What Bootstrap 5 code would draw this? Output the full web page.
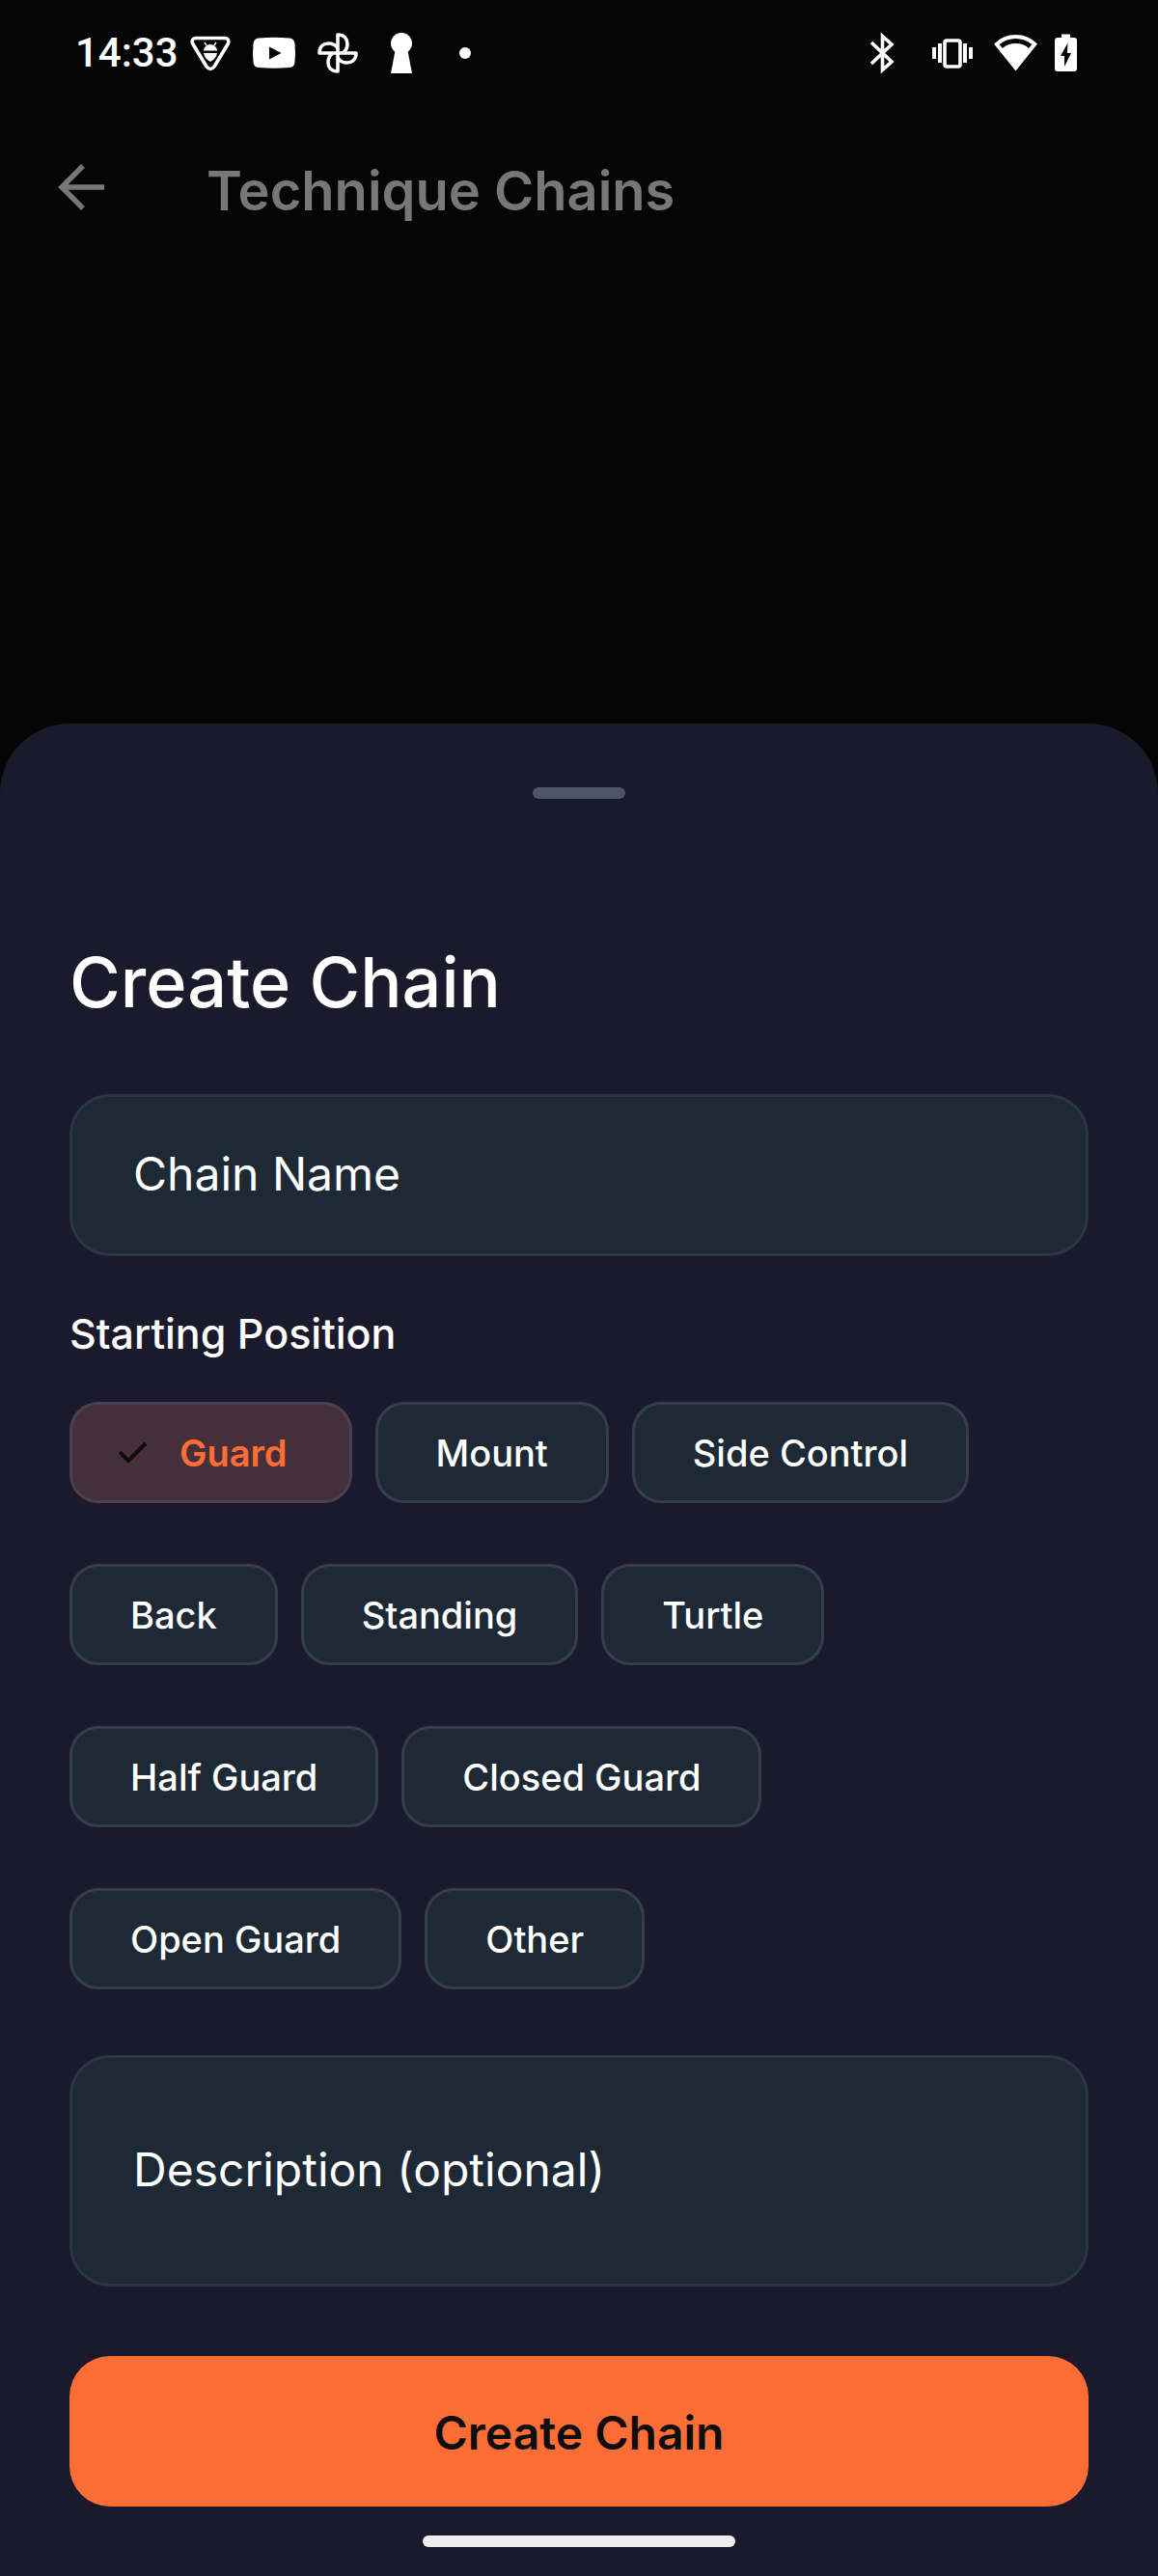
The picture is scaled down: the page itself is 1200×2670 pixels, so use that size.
<!DOCTYPE html>
<html lang="en" data-bs-theme="dark">
<head>
<meta charset="utf-8">
<meta name="viewport" content="width=device-width, initial-scale=1">
<title>Technique Chains</title>
<link href="https://cdn.jsdelivr.net/npm/bootstrap@5.3.0/dist/css/bootstrap.min.css" rel="stylesheet">
<style>
  :root { --sheet: #1b192c; --field: #1e2936; --accent: #ff6d36; }
  body { background: #050505; color: #fff; font-family: Inter, Roboto, sans-serif; }
  svg { display: block; flex: none; }

  .status-bar { height: 110px; padding: 0 84px 0 78px; }
  .status-time { font: 500 42px/48px Roboto, sans-serif; margin-right: 9px; }
  .status-icons { gap: 18px; }
  .app-bar { height: 168px; padding: 0 60px; gap: 106px; color: #777; }
  .app-title { font-size: 56px; line-height: 72px; font-weight: 600; color: inherit; }

  .sheet { background: var(--sheet); border-radius: 72px 72px 0 0; padding: 66px 72px 30px; }
  .grabber { width: 96px; height: 12px; background: #4d5564; margin-bottom: 148px; }
  .sheet-title { font-size: 72px; line-height: 84px; font-weight: 500; margin-bottom: 74px; color: #fff; }

  .field, .field:focus {
    background: var(--field); color: #fff; border: 3px solid #2c3544; border-radius: 42px;
    font-size: 48px; line-height: 60px; padding: 50px 63px 52px; box-shadow: none; resize: none;
  }
  .field-tall, .field-tall:focus { padding-top: 86px; padding-bottom: 88px; overflow: hidden; }
  .field::placeholder { color: #fff; opacity: 1; }

  .group-title { font-size: 43px; line-height: 54px; font-weight: 500; margin: 53px 0 44px; color: #fff; }
  .chips { gap: 63px 24px; margin-bottom: 68px; }
  .chip.btn {
    display: flex; align-items: center; gap: 32px; height: 105px; padding: 0 60px;
    border: 3px solid #363e4d; border-radius: 30px; background: var(--field); color: #fff;
    font-size: 38px; line-height: 54px; font-weight: 500;
  }
  .chip svg { display: none; }
  .btn-check:checked + .chip.btn {
    background: #45303a; border-color: #49414f; color: var(--accent); font-weight: 600; padding: 0 64px 0 45px;
  }
  .btn-check:checked + .chip svg { display: block; }

  .submit.btn {
    background: var(--accent); color: #0d0d0d; border: 0; border-radius: 42px;
    font-size: 48px; line-height: 60px; font-weight: 600; padding: 50px 48px 46px; margin: 72px 0 30px;
  }
  .home-bar { width: 324px; height: 12px; background: #eee; }
</style>
</head>
<body>
<div class="d-flex flex-column min-vh-100">
  <div class="status-bar d-flex align-items-center justify-content-between">
    <div class="d-flex align-items-center">
      <span class="status-time">14:33</span>
      <div class="status-icons d-flex align-items-center">
        <svg width="48" height="48" viewBox="0 0 48 48" fill="none" aria-hidden="true">
          <path d="M9 8.500h30q5 .5 3.500 5.500L28 38q-4 5-8 0L5.500 14Q4 9 9 8.500z" stroke="#fff" stroke-width="3.600" stroke-linejoin="round"/>
          <path d="M17 21.500q1-6.500 7-6.500t7 6.500zM17 24h14q-1 6-7 9-6-3-7-9z" fill="#fff"/>
          <path d="M20 16l-2-3M28 16l2-3" stroke="#fff" stroke-width="1.500"/>
        </svg>
        <svg width="48" height="48" viewBox="0 0 48 48" aria-hidden="true">
          <path fill="#fff" fill-rule="evenodd" d="M8 8.500q16-1.500 32 0 5 .5 5.500 6 1 9.500 0 19-.5 5-5.500 5.500-16 1.500-32 0-5-.5-5.500-5.500-1-9.500 0-19 .5-5.500 5.500-6zM19 17.500v13L31.500 24z"/>
        </svg>
        <svg width="48" height="48" viewBox="0 0 48 48" fill="none" stroke="#fff" stroke-width="3.600" stroke-linejoin="round" aria-hidden="true">
          <path d="M24 24V5c7 0 10 4.500 10 9.500 0 4-2 7.500-5 9.500"/>
          <path d="M24 24V5c7 0 10 4.500 10 9.500 0 4-2 7.500-5 9.500" transform="rotate(90 24 24)"/>
          <path d="M24 24V5c7 0 10 4.500 10 9.500 0 4-2 7.500-5 9.500" transform="rotate(180 24 24)"/>
          <path d="M24 24V5c7 0 10 4.500 10 9.500 0 4-2 7.500-5 9.500" transform="rotate(270 24 24)"/>
        </svg>
        <svg width="48" height="48" viewBox="0 0 48 48" fill="#fff" aria-hidden="true">
          <circle cx="24" cy="14" r="11"/><path d="M18 19h12l5 26H13z"/>
        </svg>
        <svg width="48" height="48" viewBox="0 0 48 48" fill="#fff" aria-hidden="true"><circle cx="24" cy="24" r="6"/></svg>
      </div>
    </div>
    <div class="status-icons d-flex align-items-center">
      <svg class="me-1" width="48" height="48" viewBox="0 0 48 48" fill="none" stroke="#fff" stroke-width="3.600" aria-hidden="true">
        <path d="M12 13l21 20-9.500 8.500v-35L33 15 12 35"/>
      </svg>
      <svg width="48" height="48" viewBox="0 0 48 48" aria-hidden="true">
        <rect x="18" y="11" width="16" height="27" rx="2" fill="none" stroke="#fff" stroke-width="3.600"/>
        <path fill="#fff" d="M5 18h4v12H5zM11 14h4v20h-4zM37 14h4v20h-4zM43 18h4v12h-4z"/>
      </svg>
      <svg width="48" height="48" viewBox="0 0 48 48" aria-hidden="true">
        <path fill="#fff" fill-rule="evenodd" d="M3 14.500Q12 5 25.500 5T48 14.500l-22.500 28zM8.500 15l3.500 4Q17 14 25.500 14T39 19l3.500-4Q35 9 25.500 9t-17 6z"/>
      </svg>
      <svg width="23" height="48" viewBox="0 0 23 48" aria-hidden="true">
        <path fill="#fff" fill-rule="evenodd" d="M7 4.500h9V8h4q3 0 3 3v29q0 3-3 3H3q-3 0-3-3V11q0-3 3-3h4zM13.500 13.500L6 27h4v11l7-14h-4z"/>
      </svg>
    </div>
  </div>

  <header class="app-bar d-flex align-items-center">
    <a href="#" class="text-reset" aria-label="Back">
      <svg width="48" height="48" viewBox="0 0 48 48" fill="none" stroke="currentColor" stroke-width="5.500"><path d="M48 24H4M26 2L4 24l22 22"/></svg>
    </a>
    <h1 class="app-title m-0 pt-2">Technique Chains</h1>
  </header>

  <form class="sheet d-flex flex-column mt-auto">
    <div class="grabber rounded-pill align-self-center"></div>
    <h2 class="sheet-title mt-0">Create Chain</h2>
    <input type="text" class="form-control field" placeholder="Chain Name" aria-label="Chain Name">

    <h3 class="group-title" id="position-title">Starting Position</h3>
    <div class="chips d-flex flex-wrap" role="radiogroup" aria-labelledby="position-title">
      <input type="radio" class="btn-check" name="position" id="p-guard" checked>
      <label class="btn chip" for="p-guard"><svg width="34" height="30" viewBox="0 0 34 30" fill="none" stroke="#0d0d0d" stroke-width="4"><path d="M4 14l9 9L31 5"/></svg>Guard</label>
      <input type="radio" class="btn-check" name="position" id="p-mount">
      <label class="btn chip" for="p-mount">Mount</label>
      <input type="radio" class="btn-check" name="position" id="p-side">
      <label class="btn chip" for="p-side">Side Control</label>
      <input type="radio" class="btn-check" name="position" id="p-back">
      <label class="btn chip" for="p-back">Back</label>
      <input type="radio" class="btn-check" name="position" id="p-standing">
      <label class="btn chip" for="p-standing">Standing</label>
      <input type="radio" class="btn-check" name="position" id="p-turtle">
      <label class="btn chip" for="p-turtle">Turtle</label>
      <input type="radio" class="btn-check" name="position" id="p-half">
      <label class="btn chip" for="p-half">Half Guard</label>
      <input type="radio" class="btn-check" name="position" id="p-closed">
      <label class="btn chip" for="p-closed">Closed Guard</label>
      <input type="radio" class="btn-check" name="position" id="p-open">
      <label class="btn chip" for="p-open">Open Guard</label>
      <input type="radio" class="btn-check" name="position" id="p-other">
      <label class="btn chip" for="p-other">Other</label>
    </div>

    <textarea class="form-control field field-tall" rows="1" placeholder="Description (optional)" aria-label="Description (optional)"></textarea>
    <button type="submit" class="btn submit w-100">Create Chain</button>
    <div class="home-bar rounded-pill align-self-center"></div>
  </form>
</div>
<script src="https://cdn.jsdelivr.net/npm/bootstrap@5.3.0/dist/js/bootstrap.bundle.min.js"></script>
</body>
</html>
